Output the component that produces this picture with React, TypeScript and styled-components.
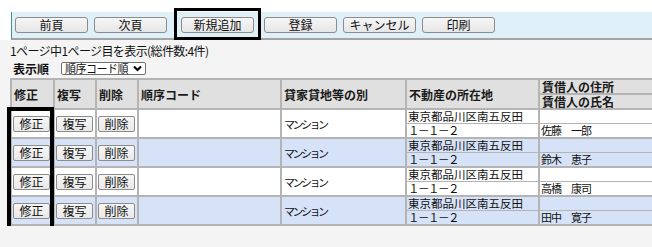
import styled, { createGlobalStyle } from 'styled-components';

const records = [
  { id: 1, type: 'マンション', addr1: '東京都品川区南五反田', addr2: '１－１－２', name: '佐藤　一郎' },
  { id: 2, type: 'マンション', addr1: '東京都品川区南五反田', addr2: '１－１－２', name: '鈴木　恵子' },
  { id: 3, type: 'マンション', addr1: '東京都品川区南五反田', addr2: '１－１－２', name: '高橋　康司' },
  { id: 4, type: 'マンション', addr1: '東京都品川区南五反田', addr2: '１－１－２', name: '田中　寛子' },
];

const tools = ['前頁', '次頁', '新規追加', '登録', 'キャンセル', '印刷'];

export default function App() {
  return (
    <>
      <GlobalStyle />
      <Top>
        <Toolbar>
          {tools.map((t) => (
            <ToolButton key={t} $highlight={t === '新規追加'}>
              {t}
            </ToolButton>
          ))}
        </Toolbar>
      </Top>
      <Content>
        <Info>1ページ中1ページ目を表示(総件数:4件)</Info>
        <SortRow>
          <SortLabel>表示順</SortLabel>
          <Select>
            順序コード順
            <svg width="9" height="7" viewBox="0 0 9 7">
              <polyline points="1,1.5 4.5,5 8,1.5" fill="none" stroke="#000" strokeWidth="2" />
            </svg>
          </Select>
        </SortRow>
        <TableWrap>
          <Table>
            <colgroup>
              <col style={{ width: 43 }} />
              <col style={{ width: 42 }} />
              <col style={{ width: 42 }} />
              <col style={{ width: 143 }} />
              <col style={{ width: 125 }} />
              <col style={{ width: 133 }} />
              <col style={{ width: 140 }} />
            </colgroup>
            <thead>
              <tr>
                <Th rowSpan={2}>修正</Th>
                <Th rowSpan={2}>複写</Th>
                <Th rowSpan={2}>削除</Th>
                <Th rowSpan={2}>順序コード</Th>
                <Th rowSpan={2}>貸家貸地等の別</Th>
                <Th rowSpan={2}>不動産の所在地</Th>
                <Th $sub>賃借人の住所</Th>
              </tr>
              <tr>
                <Th $sub>賃借人の氏名</Th>
              </tr>
            </thead>
            <tbody>
              {records.map((r, i) => (
                <RecordRows key={r.id} r={r} alt={i % 2 === 1} />
              ))}
            </tbody>
          </Table>
          <ColumnMark />
        </TableWrap>
      </Content>
    </>
  );
}

function RecordRows({ r, alt }: { r: (typeof records)[number]; alt: boolean }) {
  return (
    <>
      <Tr $alt={alt}>
        <BtnCell rowSpan={2}>
          <RowButton>修正</RowButton>
        </BtnCell>
        <BtnCell rowSpan={2}>
          <RowButton>複写</RowButton>
        </BtnCell>
        <BtnCell rowSpan={2}>
          <RowButton>削除</RowButton>
        </BtnCell>
        <Td rowSpan={2}></Td>
        <Td rowSpan={2}>
          <Kana>{r.type}</Kana>
        </Td>
        <SubTd $top>{r.addr1}</SubTd>
        <SubTd $top></SubTd>
      </Tr>
      <Tr $alt={alt}>
        <SubTd>
          <Num>{r.addr2}</Num>
        </SubTd>
        <SubTd>
          <Name>{r.name}</Name>
        </SubTd>
      </Tr>
    </>
  );
}

const GlobalStyle = createGlobalStyle`
  body {
    margin: 0;
    background: #f4f4f4;
    font-family: "Noto Sans CJK JP", "Noto Sans", sans-serif;
    color: #111;
    overflow: hidden;
  }
`;

const Top = styled.div`
  background: #fff;
  padding: 12px 0 0 11px;
`;

const Toolbar = styled.div`
  display: flex;
  align-items: center;
  gap: 6px;
  height: 26px;
  padding-left: 3px;
  background: #e0f0f8;
  border-left: 1px solid #3f9a72;
  border-bottom: 2px solid #a3a3a3;
`;

const ToolButton = styled.button<{ $highlight?: boolean }>`
  position: relative;
  box-sizing: border-box;
  width: 73px;
  height: 16px;
  padding: 0;
  margin: ${(p) => (p.$highlight ? '0 4px 0 8px' : '0')};
  font: 12px/14px "Noto Sans CJK JP", sans-serif;
  color: #111;
  background: linear-gradient(#f6f6f6, #e6e6e6);
  border: 1px solid #8c8c8c;
  border-radius: 3px;

  &::after {
    content: '';
    display: ${(p) => (p.$highlight ? 'block' : 'none')};
    position: absolute;
    top: -10px;
    bottom: -8px;
    left: -8px;
    right: -8px;
    border: 3px solid #000;
  }
`;

const Content = styled.div`
  padding: 3px 0 0 10px;
`;

const Info = styled.div`
  font-size: 12px;
  line-height: 16px;
  letter-spacing: -0.6px;
`;

const SortRow = styled.div`
  display: flex;
  align-items: center;
  height: 19px;
  padding-left: 3px;
`;

const SortLabel = styled.span`
  font-size: 12px;
  font-weight: bold;
  margin-right: 12px;
`;

const Select = styled.div`
  box-sizing: border-box;
  display: flex;
  align-items: center;
  justify-content: space-between;
  width: 85px;
  height: 13px;
  padding: 0 3px;
  font-size: 11px;
  line-height: 11px;
  letter-spacing: -0.5px;
  background: #fff;
  border: 1px solid #707070;
  border-radius: 2px;
`;

const TableWrap = styled.div`
  position: relative;
`;

const Table = styled.table`
  border-collapse: collapse;
  table-layout: fixed;
  width: 668px;
  font-size: 12px;
`;

const Th = styled.th<{ $sub?: boolean }>`
  height: 13px;
  padding: 0 2px;
  text-align: left;
  vertical-align: middle;
  font-weight: bold;
  line-height: 13px;
  white-space: nowrap;
  background: #e0e0e0;
  color: #1a1a1a;
  border: 2px solid #b4b4b4;
  border-bottom-width: ${(p) => (p.$sub ? '1px' : '2px')};
`;

const Tr = styled.tr<{ $alt: boolean }>`
  background: ${(p) => (p.$alt ? '#d6e2f8' : '#fff')};
`;

const Td = styled.td`
  padding: 0 2px;
  vertical-align: middle;
  white-space: nowrap;
  border: 2px solid #b4b4b4;
`;

const BtnCell = styled(Td)`
  padding: 0 0 0 1px;
`;

const SubTd = styled.td<{ $top?: boolean }>`
  height: 13px;
  padding: 0 1px;
  font-size: 11.5px;
  line-height: 13px;
  white-space: nowrap;
  border-left: 2px solid #b4b4b4;
  border-right: 2px solid #b4b4b4;
  border-top: ${(p) => (p.$top ? '2px' : '1px')} solid #b4b4b4;
  border-bottom: ${(p) => (p.$top ? '1px' : '2px')} solid #b4b4b4;
`;

const RowButton = styled.button`
  box-sizing: border-box;
  width: 37px;
  height: 16px;
  padding: 0;
  font: 12px/14px "Noto Sans CJK JP", sans-serif;
  color: #111;
  background: linear-gradient(#f7f7f7, #e8e8e8);
  border: 1px solid #8c8c8c;
  border-radius: 2px;
`;

const Kana = styled.span`
  font-size: 11px;
  letter-spacing: -2.5px;
`;

const Num = styled.span`
  letter-spacing: -1.5px;
`;

const Name = styled.span`
  font-size: 11px;
  letter-spacing: -1px;
`;

const ColumnMark = styled.div`
  position: absolute;
  left: -3px;
  top: 29px;
  width: 47px;
  height: 123px;
  box-sizing: border-box;
  border: 4px solid #000;
  pointer-events: none;
`;
